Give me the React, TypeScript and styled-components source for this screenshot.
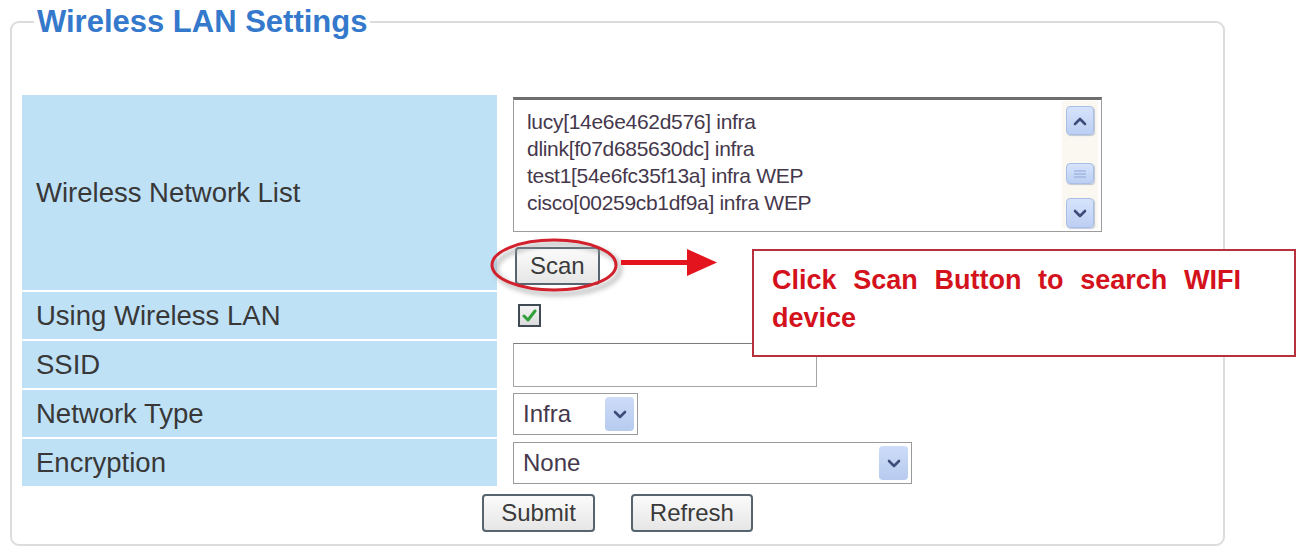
import React from "react";
import styled, { createGlobalStyle } from "styled-components";

const GlobalStyle = createGlobalStyle`
  html, body { margin: 0; padding: 0; background: #ffffff; }
  body { font-family: "Liberation Sans", Arial, sans-serif; }
  * { box-sizing: border-box; }
`;

const Page = styled.div`
  position: relative;
  width: 1301px;
  height: 556px;
  padding: 7px 0 0 10px;
  overflow: hidden;
`;

const Fieldset = styled.fieldset`
  margin: 0;
  width: 1215px;
  height: 539px;
  border: 2px solid #dcdcdc;
  border-radius: 9px;
  padding: 0 10px 0 10px;
  min-width: 0;
`;

const Legend = styled.legend`
  margin-left: 12px;
  padding: 0 3px;
  font-size: 31px;
  line-height: 30px;
  font-weight: bold;
  color: #3579cc;
`;

const FormGrid = styled.div`
  display: grid;
  grid-template-columns: 475px 657px;
  column-gap: 3px;
  row-gap: 2px;
  margin-top: 58px;
`;

const LabelCell = styled.div<{ $h: number }>`
  height: ${(p) => p.$h}px;
  background: #bfe1f6;
  display: flex;
  align-items: center;
  padding-left: 14px;
  font-size: 27.5px;
  color: #383838;
`;

const ValueCell = styled.div<{ $h: number }>`
  height: ${(p) => p.$h}px;
  display: flex;
  align-items: center;
  padding-left: 13px;
`;

const ListCell = styled.div`
  display: flex;
  flex-direction: column;
  align-items: flex-start;
  padding: 2px 0 0 13px;
`;

const ListBox = styled.div`
  width: 589px;
  height: 135px;
  border: 1px solid #9c9c9c;
  border-top: 3px solid #6e6e6e;
  display: flex;
  background: #fff;
`;

const ListItems = styled.div`
  flex: 1;
  padding: 8px 0 0 13px;
  font-size: 21px;
  letter-spacing: -0.3px;
  line-height: 27px;
  color: #45384c;
`;

const ScrollTrack = styled.div`
  width: 36px;
  margin: 1px 3px 3px 0;
  background: #faf8f0;
  display: flex;
  flex-direction: column;
  align-items: center;
  padding-top: 5px;
`;

const ScrollBtn = styled.div<{ $h: number; $mt: number }>`
  width: 28px;
  height: ${(p) => p.$h}px;
  margin-top: ${(p) => p.$mt}px;
  border-radius: 4px;
  border: 1px solid #a9bde6;
  background: linear-gradient(#d6e3fb, #bccff3);
  box-shadow: 1px 1px 1px rgba(90, 110, 150, 0.35);
  display: flex;
  align-items: center;
  justify-content: center;
`;

const ScanWrap = styled.div`
  position: relative;
  margin: 15px 0 0 2px;
`;

const Button = styled.button<{ $px: number }>`
  height: 38px;
  padding: 0 ${(p) => p.$px}px;
  border: 2px solid #56646f;
  border-radius: 4px;
  background: linear-gradient(#fbfbfb, #e6e6e6);
  font-family: "Liberation Sans", Arial, sans-serif;
  font-size: 24px;
  color: #3a3a3a;
  line-height: 34px;
`;

const Ellipse = styled.svg`
  position: absolute;
  left: -25px;
  top: -11px;
  overflow: visible;
`;

const Arrow = styled.svg`
  position: absolute;
  left: 106px;
  top: 1px;
`;

const Check = styled.div`
  width: 23px;
  height: 23px;
  margin-left: 5px;
  border: 2px solid #3f4a55;
  background: linear-gradient(#f4f4f4, #dcdcdc);
  display: flex;
  align-items: center;
  justify-content: center;
`;

const TextInput = styled.div`
  width: 304px;
  height: 44px;
  border: 1px solid #a4a4a4;
  border-top-color: #7c7c7c;
  background: #fff;
`;

const Select = styled.div<{ $w: number }>`
  width: ${(p) => p.$w}px;
  height: 42px;
  border: 1px solid #9a9a9a;
  background: #fff;
  display: flex;
  align-items: center;
  justify-content: space-between;
  padding: 0 3px 0 9px;
  font-size: 24px;
  color: #45384c;
`;

const SelectArrow = styled.div`
  width: 29px;
  height: 34px;
  border-radius: 4px;
  background: linear-gradient(#cddcf7, #b7cbf0);
  display: flex;
  align-items: center;
  justify-content: center;
`;

const ButtonBar = styled.div`
  display: flex;
  justify-content: center;
  gap: 36px;
  margin-top: 8px;
`;

const Callout = styled.div`
  position: absolute;
  left: 752px;
  top: 249px;
  width: 544px;
  height: 108px;
  border: 2px solid #b8303c;
  background: #ffffff;
  padding: 10px 53px 0 18px;
  font-size: 27px;
  font-weight: bold;
  line-height: 38px;
  color: #d3121c;
`;

const CalloutLine = styled.div<{ $justify?: boolean }>`
  text-align: ${(p) => (p.$justify ? "justify" : "left")};
  text-align-last: ${(p) => (p.$justify ? "justify" : "left")};
`;

const Chevron = ({ up }: { up?: boolean }) => (
  <svg width="16" height="12" viewBox="0 0 16 12">
    <path
      d={up ? "M3 9 L8 4 L13 9" : "M3 4 L8 9 L13 4"}
      fill="none"
      stroke="#3b4d78"
      strokeWidth="2.6"
      strokeLinecap="round"
      strokeLinejoin="round"
    />
  </svg>
);

const Grip = () => (
  <svg width="16" height="10" viewBox="0 0 16 10">
    <path d="M2 2 H14 M2 5 H14 M2 8 H14" stroke="#8ea6d6" strokeWidth="1.2" />
  </svg>
);

const networks = [
  "lucy[14e6e462d576] infra",
  "dlink[f07d685630dc] infra",
  "test1[54e6fc35f13a] infra WEP",
  "cisco[00259cb1df9a] infra WEP",
];

export default function App() {
  return (
    <Page>
      <GlobalStyle />
      <Fieldset>
        <Legend>Wireless LAN Settings</Legend>
        <FormGrid>
          <LabelCell $h={195}>Wireless Network List</LabelCell>
          <ListCell>
            <ListBox>
              <ListItems>
                {networks.map((n) => (
                  <div key={n}>{n}</div>
                ))}
              </ListItems>
              <ScrollTrack>
                <ScrollBtn $h={29} $mt={0}>
                  <Chevron up />
                </ScrollBtn>
                <ScrollBtn $h={21} $mt={28}>
                  <Grip />
                </ScrollBtn>
                <ScrollBtn $h={30} $mt={14}>
                  <Chevron />
                </ScrollBtn>
              </ScrollTrack>
            </ListBox>
            <ScanWrap>
              <Button $px={13}>Scan</Button>
              <Ellipse width="130" height="58">
                <defs>
                  <filter id="sh" x="-20%" y="-20%" width="140%" height="160%">
                    <feGaussianBlur stdDeviation="2.5" />
                  </filter>
                </defs>
                <ellipse cx="68" cy="33" rx="62" ry="25" fill="none" stroke="#9a9a9a" strokeWidth="4" filter="url(#sh)" opacity="0.7" />
                <ellipse cx="64" cy="29" rx="62" ry="25" fill="none" stroke="#d2202c" strokeWidth="3" />
              </Ellipse>
              <Arrow width="96" height="30" viewBox="0 0 96 30">
                <rect x="0" y="12" width="70" height="5" fill="#e3141e" />
                <polygon points="66,1 96,14.5 66,28" fill="#e3141e" />
              </Arrow>
            </ScanWrap>
          </ListCell>

          <LabelCell $h={47}>Using Wireless LAN</LabelCell>
          <ValueCell $h={47}>
            <Check>
              <svg width="15" height="13" viewBox="0 0 15 13">
                <path d="M2 7 L6 11 L13 2" fill="none" stroke="#2fa03a" strokeWidth="3" strokeLinecap="round" strokeLinejoin="round" />
              </svg>
            </Check>
          </ValueCell>

          <LabelCell $h={47}>SSID</LabelCell>
          <ValueCell $h={47}>
            <TextInput />
          </ValueCell>

          <LabelCell $h={47}>Network Type</LabelCell>
          <ValueCell $h={47}>
            <Select $w={125}>
              <span>Infra</span>
              <SelectArrow>
                <Chevron />
              </SelectArrow>
            </Select>
          </ValueCell>

          <LabelCell $h={47}>Encryption</LabelCell>
          <ValueCell $h={47}>
            <Select $w={399}>
              <span>None</span>
              <SelectArrow>
                <Chevron />
              </SelectArrow>
            </Select>
          </ValueCell>
        </FormGrid>
        <ButtonBar>
          <Button $px={17}>Submit</Button>
          <Button $px={17}>Refresh</Button>
        </ButtonBar>
      </Fieldset>
      <Callout>
        <CalloutLine $justify>Click Scan Button to search WIFI</CalloutLine>
        <CalloutLine>device</CalloutLine>
      </Callout>
    </Page>
  );
}
